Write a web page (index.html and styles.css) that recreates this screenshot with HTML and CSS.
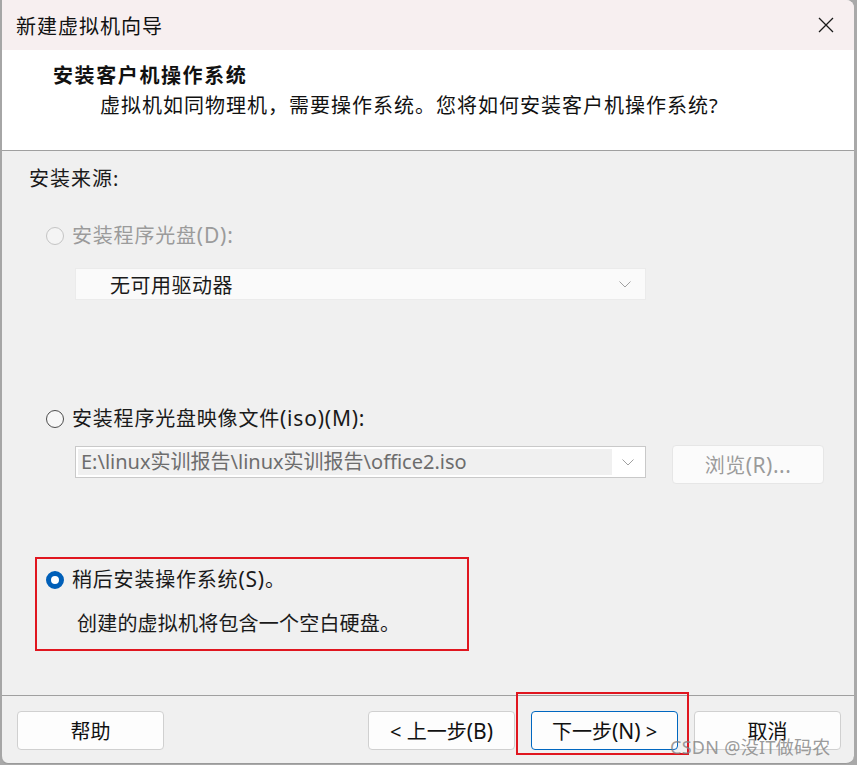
FILE: index.html
```html
<!DOCTYPE html>
<html lang="zh-CN">
<head>
<meta charset="utf-8">
<title>新建虚拟机向导</title>
<link rel="stylesheet" href="styles.css">
</head>
<body>
<div class="window">
  <div class="titlebar">
    <span class="title">新建虚拟机向导</span>
    <span class="close">
      <svg width="16" height="16" viewBox="0 0 16 16"><path d="M1 1L15 15M15 1L1 15" stroke="#1a1a1a" stroke-width="1.3" fill="none"/></svg>
    </span>
  </div>
  <div class="header">
    <div class="h-title">安装客户机操作系统</div>
    <div class="h-sub">虚拟机如同物理机，需要操作系统。您将如何安装客户机操作系统?</div>
  </div>
  <div class="content">
    <div class="label">安装来源:</div>

    <div class="radio-row disabled first">
      <span class="radio"></span>
      <span>安装程序光盘<span class="lat">(D):</span></span>
    </div>
    <div class="select">
      <span class="select-text">无可用驱动器</span>
      <svg class="chev" width="12" height="7" viewBox="0 0 12 7"><path d="M0.5 0.5L6 6L11.5 0.5" stroke="#a0a0a0" stroke-width="1" fill="none"/></svg>
    </div>

    <div class="radio-row second">
      <span class="radio"></span>
      <span>安装程序光盘映像文件<span class="lat">(iso)(M):</span></span>
    </div>
    <div class="combo-row">
      <div class="combo">
        <span class="combo-text">E:\linux实训报告\linux实训报告\office2.iso</span>
        <span class="combo-btn">
          <svg width="12" height="7" viewBox="0 0 12 7"><path d="M0.5 0.5L6 6L11.5 0.5" stroke="#a0a0a0" stroke-width="1" fill="none"/></svg>
        </span>
      </div>
      <div class="browse"><span>浏览<span class="lat">(R)...</span></span></div>
    </div>

    <div class="later-box">
      <div class="radio-row">
        <span class="radio checked"></span>
        <span>稍后安装操作系统<span class="lat">(S)</span>。</span>
      </div>
      <div class="desc">创建的虚拟机将包含一个空白硬盘。</div>
    </div>
  </div>
  <div class="footer">
    <div class="btn"><span>帮助</span></div>
    <div class="spacer"></div>
    <div class="btn"><span>&lt; 上一步<span class="lat">(B)</span></span></div>
    <div class="btn primary"><span>下一步<span class="lat">(N)</span> &gt;</span></div>
    <div class="btn"><span>取消</span></div>
    <div class="mark-box"></div>
    <div class="watermark">CSDN @没IT做码农</div>
  </div>
</div>
</body>
</html>
```

FILE: styles.css
```css
html, body {
  margin: 0;
  padding: 0;
}
body {
  width: 857px;
  height: 765px;
  background: #a9a9a9;
  overflow: hidden;
  font-family: "Noto Sans", "Noto Sans CJK SC", sans-serif;
  color: #1a1a1a;
}
.lat {
  font-size: 1.05em;
}
.window {
  width: 852px;
  height: 763px;
  background: #f0f0f0;
  border-left: 2px solid #a6a6a6;
  border-bottom: 1px solid #9a9a9a;
  border-top-right-radius: 8px;
  border-bottom-left-radius: 8px;
  border-bottom-right-radius: 8px;
  overflow: hidden;
  display: flex;
  flex-direction: column;
  position: relative;
}
.titlebar {
  height: 50px;
  background: #f7eff0;
  display: flex;
  align-items: center;
  justify-content: space-between;
  padding: 0 20px 0 14px;
  flex-shrink: 0;
}
.title {
  font-size: 20px;
  letter-spacing: 1px;
  color: #111;
}
.close {
  display: flex;
  width: 16px;
  height: 16px;
}
.header {
  height: 101px;
  background: #ffffff;
  border-bottom: 1px solid #a0a0a0;
  flex-shrink: 0;
  box-sizing: border-box;
  padding-top: 12px;
}
.h-title {
  font-size: 20px;
  font-weight: 700;
  letter-spacing: 1.6px;
  line-height: 28px;
  margin-left: 51px;
  color: #111;
}
.h-sub {
  font-size: 20px;
  letter-spacing: 1px;
  line-height: 28px;
  margin-left: 98px;
  margin-top: 2px;
  color: #111;
}
.content {
  flex: 1;
  padding: 14px 0 0 0;
  border-bottom: 1px solid #a0a0a0;
}
.label {
  font-size: 20px;
  letter-spacing: 1px;
  line-height: 28px;
  margin-left: 27px;
}
.radio-row {
  display: flex;
  align-items: center;
  gap: 8px;
  font-size: 20px;
  letter-spacing: 0.8px;
  line-height: 28px;
  margin-left: 44px;
}
.radio-row.first {
  margin-top: 28px;
}
.radio-row.second {
  margin-top: 104px;
}
.radio {
  width: 16px;
  height: 16px;
  border: 1px solid #4d4d4d;
  border-radius: 50%;
  background: #f7f7f7;
  flex-shrink: 0;
}
.disabled {
  color: #9b9b9b;
}
.disabled .radio {
  border-color: #c4c4c4;
  background: #f4f4f4;
}
.radio.checked {
  width: 8px;
  height: 8px;
  border: 5px solid #005fb8;
  background: #ffffff;
}
.select {
  margin: 18px 0 0 73px;
  width: 521px;
  height: 30px;
  background: #fafafa;
  border: 1px solid #ebebeb;
  display: flex;
  align-items: center;
  justify-content: space-between;
  padding: 0 14px 0 34px;
}
.select-text {
  font-size: 20px;
  letter-spacing: 0.5px;
  color: #1a1a1a;
}
.chev {
  display: block;
}
.combo-row {
  display: flex;
  align-items: flex-start;
  margin: 12px 0 0 73px;
  gap: 26px;
}
.combo {
  margin-top: 1px;
  border: 1px solid #c9c9c9;
  background: #ffffff;
  display: flex;
  padding: 2px;
  width: 565px;
  height: 26px;
}
.combo-text {
  flex: 1;
  background: #f0f0f0;
  font-size: 20px;
  line-height: 26px;
  color: #6d6d6d;
  padding-left: 3px;
  white-space: nowrap;
  overflow: hidden;
}
.combo-btn {
  width: 31px;
  display: flex;
  align-items: center;
  justify-content: center;
}
.browse {
  width: 150px;
  height: 37px;
  background: #fbfbfb;
  border: 1px solid #e6e6e6;
  border-radius: 4px;
  display: flex;
  align-items: center;
  justify-content: center;
  font-size: 20px;
  color: #9b9b9b;
  letter-spacing: 0.5px;
}
.later-box {
  margin: 73px 0 0 33px;
  width: 434px;
  height: 94px;
  border: 2px solid #e0161f;
  padding: 6px 0 0 0;
  box-sizing: border-box;
}
.later-box .radio-row {
  margin-left: 9px;
}
.desc {
  font-size: 20px;
  letter-spacing: 0.2px;
  line-height: 28px;
  margin: 16px 0 0 40px;
}
.footer {
  height: 67px;
  flex-shrink: 0;
  display: flex;
  align-items: flex-start;
  padding: 15px 13px 0 15px;
  box-sizing: border-box;
  gap: 16px;
  position: relative;
}
.spacer {
  flex: 1;
}
.btn {
  width: 145px;
  height: 37px;
  background: #fdfdfd;
  border: 1px solid #d0d0d0;
  border-radius: 4px;
  display: flex;
  align-items: center;
  justify-content: center;
  font-size: 20px;
  color: #111;
  flex-shrink: 0;
  white-space: pre;
}
.btn.primary {
  border-color: #0067c0;
}
.mark-box {
  position: absolute;
  left: 514px;
  top: -4px;
  width: 173px;
  height: 63px;
  border: 2px solid #e0161f;
  box-sizing: border-box;
  pointer-events: none;
}
.watermark {
  position: absolute;
  left: 668px;
  top: 37px;
  font-size: 18px;
  color: rgba(130, 130, 130, 0.8);
  white-space: nowrap;
  letter-spacing: 0.3px;
}
```
